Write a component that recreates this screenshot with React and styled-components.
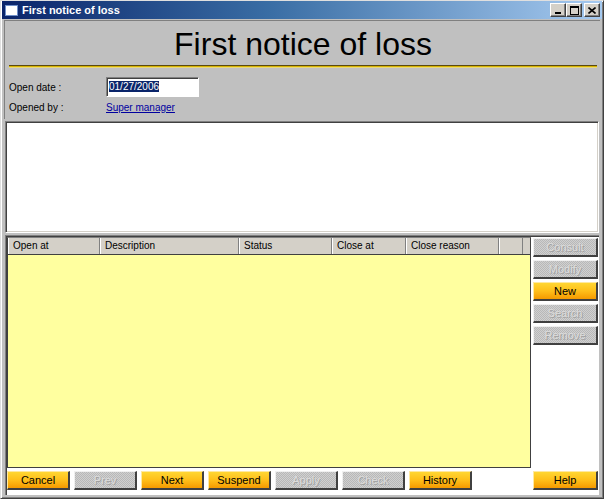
import styled, { createGlobalStyle } from "styled-components";

const GlobalStyle = createGlobalStyle`
  html, body {
    margin: 0;
    padding: 0;
    background: #c0c0c0;
  }
  * {
    box-sizing: border-box;
  }
`;

const bottomButtons = [
  { label: "Cancel", enabled: true },
  { label: "Prev", enabled: false },
  { label: "Next", enabled: true },
  { label: "Suspend", enabled: true },
  { label: "Apply", enabled: false },
  { label: "Check", enabled: false },
  { label: "History", enabled: true },
];

const sideButtons = [
  { label: "Consult", enabled: false },
  { label: "Modify", enabled: false },
  { label: "New", enabled: true },
  { label: "Search", enabled: false },
  { label: "Remove", enabled: false },
];

const columns = [
  { label: "Open at", width: 92 },
  { label: "Description", width: 139 },
  { label: "Status", width: 93 },
  { label: "Close at", width: 74 },
  { label: "Close reason", width: 93 },
  { label: "", width: 24 },
];

export default function App() {
  return (
    <>
      <GlobalStyle />
      <Window>
        <TitleBar>
          <TitleIcon />
          <TitleText>First notice of loss</TitleText>
          <Controls>
            <CtrlButton>
              <svg width="8" height="7" viewBox="0 0 8 7">
                <rect x="1" y="5" width="6" height="2" fill="#000" />
              </svg>
            </CtrlButton>
            <CtrlButton>
              <svg width="9" height="9" viewBox="0 0 9 9">
                <rect x="0.5" y="0.5" width="8" height="8" fill="none" stroke="#000" />
                <rect x="0" y="0" width="9" height="2" fill="#000" />
              </svg>
            </CtrlButton>
            <CtrlButton $gap>
              <svg width="8" height="7" viewBox="0 0 8 7">
                <path d="M0.5 0.5 L7.5 6.5 M7.5 0.5 L0.5 6.5" stroke="#000" strokeWidth="1.6" />
              </svg>
            </CtrlButton>
          </Controls>
        </TitleBar>

        <Body>
          <HeaderPanel>
            <Heading>First notice of loss</Heading>
            <Rule />
            <FieldRow>
              <FieldLabel>Open date :</FieldLabel>
              <DateBox>
                <Selected>01/27/2006</Selected>
              </DateBox>
            </FieldRow>
            <FieldRow>
              <FieldLabel>Opened by :</FieldLabel>
              <UserLink>Super manager</UserLink>
            </FieldRow>
          </HeaderPanel>

          <Memo />

          <LowerPanel>
            <ListArea>
              <Grid>
                <GridHead>
                  {columns.map((c, i) => (
                    <HeadCell key={i} style={{ width: c.width }}>
                      {c.label}
                    </HeadCell>
                  ))}
                  <HeadFiller />
                </GridHead>
                <GridBody />
              </Grid>
              <SideColumn>
                {sideButtons.map((b) => (
                  <ActionButton key={b.label} $enabled={b.enabled} $width={65}>
                    {b.label}
                  </ActionButton>
                ))}
              </SideColumn>
            </ListArea>
            <ButtonBar>
              <ButtonGroup>
                {bottomButtons.map((b) => (
                  <ActionButton key={b.label} $enabled={b.enabled} $width={63}>
                    {b.label}
                  </ActionButton>
                ))}
              </ButtonGroup>
              <ActionButton $enabled $width={65}>
                Help
              </ActionButton>
            </ButtonBar>
          </LowerPanel>
        </Body>
      </Window>
    </>
  );
}

const Window = styled.div`
  width: 604px;
  height: 499px;
  display: flex;
  flex-direction: column;
  background: #c0c0c0;
  border-top: 1px solid #dfdfdf;
  border-left: 1px solid #dfdfdf;
  border-right: 1px solid #404040;
  border-bottom: 1px solid #404040;
  box-shadow: inset 1px 1px 0 #ffffff, inset -1px -1px 0 #808080;
  font-family: "Liberation Sans", Arial, sans-serif;
  padding: 0 3px 3px 3px;
`;

const TitleBar = styled.div`
  height: 18px;
  display: flex;
  align-items: center;
  padding: 0 2px 0 2px;
  background: linear-gradient(to right, #0a246a 0%, #3a6ea5 45%, #a6caf0 100%);
  margin: 0 -2px;
`;

const TitleIcon = styled.div`
  width: 13px;
  height: 11px;
  background: #ffffff;
  border: 1px solid #6f8fc8;
  margin: 0 4px 0 1px;
`;

const TitleText = styled.div`
  flex: 1;
  color: #ffffff;
  font-weight: bold;
  font-size: 11px;
  font-family: "Liberation Sans", Arial, sans-serif;
`;

const Controls = styled.div`
  display: flex;
  align-items: center;
`;

const CtrlButton = styled.div`
  width: 16px;
  height: 14px;
  margin-left: ${(p) => (p.$gap ? "2px" : "0")};
  background: #d4d0c8;
  display: flex;
  align-items: center;
  justify-content: center;
  border-top: 1px solid #ffffff;
  border-left: 1px solid #ffffff;
  border-right: 1px solid #404040;
  border-bottom: 1px solid #404040;
  box-shadow: inset -1px -1px 0 #808080;
`;

const Body = styled.div`
  flex: 1;
  display: flex;
  flex-direction: column;
  padding: 1px 0 0 0;
`;

const HeaderPanel = styled.div`
  height: 99px;
  flex-shrink: 0;
  display: flex;
  flex-direction: column;
  border-left: 1px solid #808080;
  border-top: 1px solid #808080;
  padding: 4px 3px 0 4px;
`;

const Heading = styled.div`
  text-align: center;
  font-size: 32px;
  line-height: 38px;
  color: #000000;
  height: 38px;
`;

const Rule = styled.div`
  height: 3px;
  margin: 2px 0 9px 0;
  border-top: 1px solid #5a4a10;
  background: #d8b400;
  border-bottom: 1px solid #e8d880;
`;

const FieldRow = styled.div`
  display: flex;
  align-items: center;
  height: 20px;
`;

const FieldLabel = styled.div`
  width: 97px;
  font-size: 10px;
  color: #000000;
`;

const DateBox = styled.div`
  width: 93px;
  height: 20px;
  background: #ffffff;
  border-top: 1px solid #808080;
  border-left: 1px solid #808080;
  border-right: 1px solid #ffffff;
  border-bottom: 1px solid #ffffff;
  box-shadow: inset 1px 1px 0 #404040;
  padding: 2px 0 0 2px;
  font-size: 10px;
  line-height: 14px;
`;

const Selected = styled.span`
  background: #0a246a;
  color: #ffffff;
`;

const UserLink = styled.a`
  font-size: 10px;
  color: #0000a0;
  text-decoration: underline;
`;

const Memo = styled.div`
  height: 112px;
  flex-shrink: 0;
  margin: 2px 1px 0 1px;
  background: #ffffff;
  border-top: 1px solid #808080;
  border-left: 1px solid #808080;
  border-right: 1px solid #ffffff;
  border-bottom: 1px solid #ffffff;
  box-shadow: inset 1px 1px 0 #404040, inset -1px -1px 0 #d4d0c8;
`;

const LowerPanel = styled.div`
  flex: 1;
  margin: 2px 1px 0 1px;
  background: #ffffff;
  border-top: 1px solid #808080;
  border-left: 1px solid #808080;
  box-shadow: inset 1px 1px 0 #404040;
  display: flex;
  flex-direction: column;
  padding: 1px 0 2px 1px;
`;

const ListArea = styled.div`
  flex: 1;
  display: flex;
  gap: 2px;
`;

const Grid = styled.div`
  width: 524px;
  display: flex;
  flex-direction: column;
  border: 1px solid #404040;
  border-top: 1px solid #808080;
`;

const GridHead = styled.div`
  height: 17px;
  display: flex;
  background: #d4d0c8;
  border-bottom: 1px solid #404040;
`;

const HeadCell = styled.div`
  height: 100%;
  font-size: 10px;
  line-height: 16px;
  padding-left: 5px;
  color: #000000;
  border-right: 1px solid #808080;
  box-shadow: inset 1px 0 0 #ffffff;
  white-space: nowrap;
  overflow: hidden;
`;

const HeadFiller = styled.div`
  flex: 1;
  background: #d4d0c8;
`;

const GridBody = styled.div`
  flex: 1;
  background: #ffff9f;
`;

const SideColumn = styled.div`
  display: flex;
  flex-direction: column;
  gap: 3px;
  padding-top: 1px;
`;

const ActionButton = styled.div`
  width: ${(p) => p.$width}px;
  height: 19px;
  display: flex;
  align-items: center;
  justify-content: center;
  font-size: 11px;
  border-top: 1px solid ${(p) => (p.$enabled ? "#ffe9a0" : "#f0f0f0")};
  border-left: 1px solid ${(p) => (p.$enabled ? "#ffe9a0" : "#f0f0f0")};
  border-right: 2px solid #404040;
  border-bottom: 2px solid #404040;
  color: ${(p) => (p.$enabled ? "#000000" : "#dcdcdc")};
  text-shadow: ${(p) => (p.$enabled ? "none" : "1px 1px 0 #a0a0a0")};
  background: ${(p) =>
    p.$enabled
      ? "linear-gradient(to bottom, #ffd633 0%, #ffbf1a 50%, #f59a00 100%)"
      : "repeating-conic-gradient(#b8b8b8 0% 25%, #d0d0d0 0% 50%) 0 0 / 2px 2px"};
`;

const ButtonBar = styled.div`
  height: 22px;
  margin-top: 3px;
  display: flex;
  justify-content: space-between;
  padding-right: 1px;
`;

const ButtonGroup = styled.div`
  display: flex;
  gap: 4px;
`;
